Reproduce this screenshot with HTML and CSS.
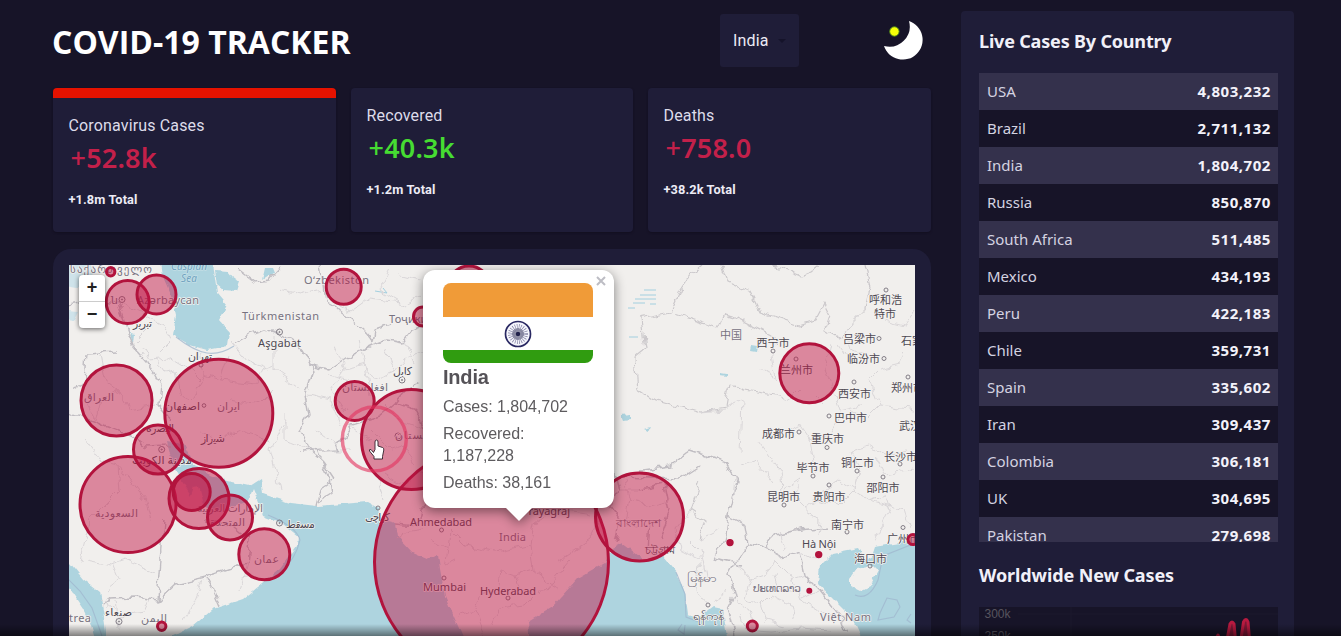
FILE: index.html
```html
<!DOCTYPE html>
<html lang="en">
<head>
<meta charset="utf-8">
<title>COVID-19 Tracker</title>
<link rel="stylesheet" href="styles.css">
</head>
<body>
<div class="app">
  <main class="app-left">
    <header class="header">
      <h1>COVID-19 TRACKER</h1>
      <div class="country-select">India<svg width="8" height="4" viewBox="0 0 10 5"><path d="M0 0h10L5 5z"/></svg></div>
      <svg class="moon" width="42" height="42" viewBox="882 20 42 42"><path d="M909 21A19.8 19.8 0 1 1 884 46A20.4 20.4 0 0 0 909 21Z" fill="#fff"/><circle cx="894.4" cy="31.5" r="4.7" fill="#f6ff08" stroke="#4d8a1c" stroke-width=".9"/></svg>
    </header>
    <section class="stats">
      <article class="card active"><h2>Coronavirus Cases</h2><p class="num"><i>+</i>52.8k</p><p class="total">+1.8m Total</p></article>
      <article class="card green"><h2>Recovered</h2><p class="num"><i>+</i>40.3k</p><p class="total">+1.2m Total</p></article>
      <article class="card"><h2>Deaths</h2><p class="num"><i>+</i>758.0</p><p class="total">+38.2k Total</p></article>
    </section>
    <section class="map-card">
      <div class="map">
        <svg class="tiles" width="846" height="371" viewBox="69 265 846 371">
          <defs>
            <filter id="rough" x="0" y="0" width="100%" height="100%" color-interpolation-filters="sRGB"><feTurbulence type="fractalNoise" baseFrequency=".09" numOctaves="2" seed="4"/><feDisplacementMap in="SourceGraphic" scale="10" xChannelSelector="R" yChannelSelector="G"/></filter>
            <filter id="coast" x="0" y="0" width="100%" height="100%" color-interpolation-filters="sRGB"><feTurbulence type="fractalNoise" baseFrequency=".12" numOctaves="2" seed="2"/><feDisplacementMap in="SourceGraphic" scale="5" xChannelSelector="R" yChannelSelector="G"/></filter>
          </defs>
          <rect x="69" y="265" width="846" height="371" fill="#f1efed"/>
          <g class="water" filter="url(#coast)">
            <path d="M160 255L212 255L215 278L217 293L227 305L219 320L230 333L228 346L207 350L190 345L173 335L176 315L172 297L163 277Z"/>
            <path d="M215 270L228 271L233 277L240 282L237 291L223 290L217 285Z"/>
            <path d="M265 268L272 268L274 273L266 278L262 281Z"/>
            <path class="shallow" d="M60 255H84L95 272L84 283L76 288L60 285ZM60 310L78 312L74 320L60 318Z"/>
            <path d="M60 552L70 563L83 579L100 592L105 623L107 645H97L90 623L83 609L60 575Z"/>
            <path d="M167 441L183 444L193 463L208 474L227 481L250 486L261 479L263 494L290 503L317 506L367 502L378 508L380 519L395 523L397 536L413 553L427 559L438 554L440 569L445 596L458 626L466 645H160L173 636L193 626L213 609L243 599L263 583L280 569L297 546L298 536L283 524L263 516L257 499L253 489L247 503L230 508L210 513L203 502L199 486L194 487L191 495L183 483L173 466Z"/>
            <path d="M530 645L528 621L553 606L577 579L605 563L611 549L622 543L643 559L663 556L677 573L685 593L688 615L698 618L713 607L723 609L728 645Z"/>
            <path d="M865 645L853 619L833 599L818 583L820 566L833 553L858 548L865 560L872 556L875 547L900 543L925 535V645Z"/>
            <path class="land" d="M850 579L857 569L873 566L878 571L870 586L860 591L850 586Z"/>
            <path d="M131 333l3 1-1 9-3-4zM752 346l6 1-1 5-6-1zM720 373l7 1v2l-7-1zM644 429l6-2-2 4zM621 415l9-1v5l-7 1z"/>
          </g>
          <g fill="none" stroke="#a2cfdf" stroke-width="1"><path d="M644 290h12M640 295h16M635 299h21M633 303h12M628 308h7M650 304h6M629 337h9M375 291l12 2M383 288l4 5"/></g>
          <g class="country" filter="url(#rough)">
            <path d="M233 343L250 334L265 329L280 334L297 345L309 360L314 370L306 393L310 415L300 430L309 450L323 462L335 480L320 490L316 506"/>
            <path d="M310 365L330 370L352 355L372 345L386 340L402 343L412 330L425 325"/>
            <path d="M238 269L255 282L270 280L280 268M320 265L325 300L345 315L365 332L373 342M373 342L375 330L390 325"/>
            <path d="M300 452L335 449L352 425L378 417L395 402L405 390L420 382M317 450L330 480L332 494L318 503"/>
            <path d="M69 305L95 300L118 303L124 320L133 345L148 362L160 385L158 405L170 420M87 354L115 352M87 354L85 382L72 390M69 412L100 424L130 436L145 447"/>
            <path d="M158 600L175 584L205 577L247 563L250 540L232 524L203 522M158 600L135 597L110 598L104 607M158 600L164 520M208 578L220 606M145 446L170 445"/>
            <path d="M641 470L670 466L690 450L705 455L726 462L738 480L733 495L728 516L745 525L748 543L765 548L775 535L800 530L828 527"/>
            <path d="M728 516L724 540L715 558L742 565M748 543L735 562L729 573L735 595L728 609L735 636M765 548L782 557L800 552L805 575L820 590L840 615L848 636"/>
            <path d="M600 468L620 477L680 479L700 466M614 472L618 490L610 505L620 520L615 540M640 490L665 485L670 510L660 540M650 520L648 550"/>
            <path d="M395 523L418 525L421 510L440 490M395 402L416 410L424 430"/>
          </g>
          <g class="region" filter="url(#rough)">
            <path class="strong" d="M641 318L645 350L635 358L638 390L650 398L700 412L726 408L730 385L745 390L775 395M640 318L670 312L680 290L690 275L702 265M675 314L718 328L724 315L740 320L770 335L778 345M722 265L728 282L750 292L760 312L800 325L815 320L824 303L830 315L825 330L842 340L850 325L865 310M772 265L800 276L820 268M865 265L870 285L865 310M700 482L690 510L705 520L700 540"/>
            <path d="M120 303L145 315L163 325L170 340M143 347L150 360L170 358L190 370L200 380M170 342L160 352M135 340L145 330M200 350L205 375L220 380L255 384M205 375L190 400L180 395M155 360L165 372L175 370L180 395M220 380L228 355M255 384L262 370L275 365M100 355L105 380L118 390L128 410M118 390L100 400L95 420M128 410L155 405M95 420L85 400M230 400L260 405L275 390M200 430L218 440L240 430L270 440M275 335L275 370L300 388M280 290L300 295L320 290M230 340L245 360L270 370M285 412L285 440L308 450M286 420L270 450L280 490M85 440L100 460L118 465L145 500L150 520M118 465L120 490L90 520L80 560M87 560L110 565L125 560L155 573M112 560L120 580L107 590M203 580L195 600L185 620M247 563L240 590M100 600L120 615L145 612L150 600M115 600L118 630"/>
            <path d="M330 300L350 312L370 298L400 302M390 270L380 290L405 305L420 295M400 275L420 280M335 345L345 370L365 365L375 380L395 372L405 360L425 350M345 370L330 390L345 412M365 365L370 395M385 350L395 372M308 395L330 400L340 425M315 430L338 445M320 450L350 450M385 405L400 420L425 430M370 430L390 450L405 445L415 465M385 475L400 485L425 470M375 470L385 500M350 425L370 440M360 340L365 365M405 340L415 365M330 375L350 380"/>
            <path d="M397 540L410 530L425 528M430 540L448 550L450 530L465 545L500 552L530 545L535 520M448 550L445 565L455 560M530 545L533 570L515 575L500 570L497 590L480 595L475 610L460 615M533 570L560 590M515 575L520 590L535 595L525 605L500 608L490 625M560 560L590 540L600 520M535 520L560 510L590 515M540 595L570 560M475 610L485 636"/>
            <path d="M740 455L742 400L726 408M760 442L780 470L782 490L800 478L795 495L805 505L815 500M740 465L755 460L775 485M805 505L805 515L820 520L818 535M820 495L840 480L855 490L860 465L850 450L870 445L885 455L905 450M860 465L855 490L870 500L885 495L890 510L875 540M815 500L840 505L855 490M800 390L790 400L775 395M790 430L800 425L810 440L830 435L840 420M810 440L815 470M870 380L880 370L900 365L905 350M870 380L880 405L915 410M880 405L865 420L850 410M830 345L825 370L835 395L840 410L860 405M840 345L850 360M700 412L725 410M760 370L775 380L770 350M865 310L845 330L850 350L865 355M885 320L905 325L915 310M735 475L733 500M815 395L825 405M875 455L885 475L915 470M870 500L905 510L910 530"/>
            <path d="M690 510L675 530L680 550L700 560M700 540L720 530M740 565L750 580L765 575L775 560L790 575L800 600M750 580L745 600L760 605L770 595L790 605L795 620M735 600L750 610L755 625M760 605L765 620L785 625M780 530L785 550M800 552L815 560M805 575L790 580M820 590L800 600L825 615L850 615M700 565L695 590L708 605M775 575L780 590L800 590M740 615L745 630L770 632L800 628L830 630M690 540L700 550L705 580M725 590L715 605"/>
            <path d="M624 480L630 500L650 505L670 500M630 500L625 525L640 530M618 490L640 490"/>
          </g>
          <g fill="none" stroke="#9fb6ce" stroke-width="1.1" opacity=".75"><path d="M60 571l20 20 12 17 10 28M176 337q18 14 31 16t27-7M268 515q29 12 32 25q-4 18-18 31M676 572l9 22 1 23 13 5 M887 598l-7 15-2 7 16-3 6-10-3-7zM855 595q14 6 23-15l5-24 30-12M911 614l-4 6 4 3M682 624l-4 6 6 4 1-9"/></g>
          <g class="places">
            <g class="marks"><circle cx="122" cy="299.500" r="3"/><circle cx="279.500" cy="332" r="3"/><circle cx="161.700" cy="449.500" r="3"/><circle cx="119" cy="621.500" r="3"/><circle cx="279.500" cy="523" r="3"/><circle cx="402" cy="380" r="3"/><circle cx="398" cy="436" r="3"/><g class="dots"><circle cx="122" cy="299.500" r=".6"/><circle cx="279.500" cy="332" r=".6"/><circle cx="161.700" cy="449.500" r=".6"/><circle cx="119" cy="621.500" r=".6"/><circle cx="279.500" cy="523" r=".6"/><circle cx="402" cy="380" r=".6"/></g><circle cx="204" cy="405.500" r="1.800"/><circle cx="441.500" cy="530" r="2"/><circle cx="444" cy="578" r="2"/><circle cx="508" cy="598" r="2"/><circle cx="201" cy="365" r="2"/><circle cx="378" cy="508" r="2"/><circle cx="886" cy="290" r="2"/><circle cx="773" cy="351" r="2"/><circle cx="796" cy="359" r="2"/><circle cx="879" cy="338.500" r="2"/><circle cx="884" cy="358.500" r="2"/><circle cx="908" cy="377" r="2"/><circle cx="854" cy="382" r="2"/><circle cx="829" cy="416" r="2"/><circle cx="799" cy="432" r="2"/><circle cx="827" cy="447.500" r="2"/><circle cx="813" cy="476" r="2"/><circle cx="857" cy="471" r="2"/><circle cx="900" cy="464" r="2"/><circle cx="829" cy="485" r="2"/><circle cx="883" cy="477" r="2"/><circle cx="784" cy="505" r="2"/><circle cx="847" cy="532" r="2"/><circle cx="903" cy="527.500" r="2"/><circle cx="870" cy="566" r="2"/><circle cx="708" cy="605" r="2"/></g>
            <g class="state"><text x="70" y="273" textLength="82">საქართველო</text><text x="111" y="303.500" textLength="5">ն</text><text x="137" y="304" textLength="62">Azərbaycan</text><text x="242" y="320" textLength="77">Türkmenistan</text><text x="304" y="284" textLength="65">Oʻzbekiston</text><text x="389" y="323" textLength="62">Тоҷикистон</text><text x="84" y="401" textLength="30">العراق</text><text x="217" y="410" textLength="23">ايران</text><text x="95" y="517" textLength="43">السعودية</text><text x="254" y="563" textLength="25">عمان</text><text x="141" y="622" textLength="26">اليمن</text><text x="342" y="391" textLength="46">افغانستان</text><text x="395" y="439" textLength="42">پاکستان</text><text x="197" y="512" textLength="66">الإمارات العربية</text><text x="210" y="526" textLength="35">المتحدة</text><text x="499" y="541" textLength="27">India</text><text x="69" y="622" textLength="22">trea</text><text x="753" y="592" textLength="48">ປະເທດລາວ</text><text x="820" y="620.500" textLength="51">Việt Nam</text><text x="616" y="527" textLength="46" lengthAdjust="spacingAndGlyphs">বাংলাদেশ</text><text x="687" y="582" textLength="29" lengthAdjust="spacingAndGlyphs">မြန်မာ</text><text x="720" y="339">中国</text></g>
            <g class="city"><text x="258" y="347" textLength="43">Aşgabat</text><text x="133" y="327" textLength="19">تبریز</text><text x="188" y="360" textLength="24">تهران</text><text x="165" y="410" textLength="35">اصفهان</text><text x="201" y="442" textLength="24">شیراز</text><text x="146" y="432" textLength="28">البصرة</text><text x="132" y="464" textLength="60">مدينة الكويت</text><text x="105" y="616" textLength="27">صنعاء</text><text x="286" y="528" textLength="29">مسقط</text><text x="393" y="375" textLength="19">کابل</text><text x="365" y="521" textLength="25">کراچی</text><text x="410" y="526" textLength="62">Ahmedabad</text><text x="423" y="591" textLength="43">Mumbai</text><text x="480" y="595" textLength="56">Hyderabad</text><text x="522" y="514.500" textLength="48">Prayagraj</text><text x="802" y="548" textLength="34">Hà Nội</text><text x="645" y="554" textLength="30" lengthAdjust="spacingAndGlyphs">চট্টগ্রাম</text><text x="693" y="620" textLength="31" lengthAdjust="spacingAndGlyphs">ရန်ကုန်</text>
              <text x="869" y="304">呼和浩</text><text x="874" y="318">特市</text><text x="843" y="343">吕梁市</text><text x="901" y="345">石家庄</text><text x="756.500" y="347">西宁市</text><text x="847" y="363">临汾市</text><text x="780" y="373.500">兰州市</text><text x="838" y="397.500">西安市</text><text x="891" y="392">郑州市</text><text x="834" y="421.500">巴中市</text><text x="899" y="430">武汉</text><text x="762" y="438">成都市</text><text x="811" y="443">重庆市</text><text x="796.500" y="472">毕节市</text><text x="841" y="467">铜仁市</text><text x="884" y="461">长沙市</text><text x="866.500" y="492">邵阳市</text><text x="767" y="501">昆明市</text><text x="812.500" y="500.500">贵阳市</text><text x="831" y="528.500">南宁市</text><text x="887" y="543">广州市</text><text x="854" y="562.500">海口市</text>
            </g>
            <g class="sea"><text x="171" y="270" textLength="36">Caspian</text><text x="181" y="282" textLength="16">Sea</text></g>
          </g>
          <g class="cases">
            <circle cx="491.500" cy="562" r="117"/><circle cx="411.500" cy="439.500" r="50"/><circle cx="218.800" cy="413.200" r="54"/><circle cx="128" cy="504.500" r="48"/><circle cx="639.500" cy="517" r="44"/><circle cx="116.500" cy="400.500" r="35.500"/><circle cx="199" cy="498.500" r="30"/><circle cx="809.300" cy="373.300" r="29.500"/><circle cx="264.300" cy="554.300" r="25.500"/><circle cx="158" cy="449.500" r="24.500"/><circle cx="230" cy="517.500" r="22.500"/><circle cx="469" cy="287" r="21"/><circle cx="127.700" cy="302" r="21.500"/><circle cx="156.500" cy="294.500" r="19.500"/><circle cx="354.700" cy="401" r="19.500"/><circle class="dense" cx="191.700" cy="492" r="18.500"/><circle cx="343.700" cy="286.700" r="17.500"/><circle cx="423" cy="316.500" r="9.500"/><circle cx="110.700" cy="271.700" r="4.200"/><circle cx="161.700" cy="626.300" r="4.200"/><circle cx="752.300" cy="626" r="5"/><circle cx="913" cy="539.600" r="5"/>
            <g class="dot"><circle cx="730" cy="542.600" r="2.200"/><circle cx="818.700" cy="554.600" r="2.200"/><circle cx="809.300" cy="590.700" r="1.500"/></g>
          </g>
          <circle cx="374.300" cy="439" r="32" fill="none" stroke="#e4345f" stroke-opacity=".62" stroke-width="3.500"/>
          <path d="M375.500 449V441.500Q375.500 439.500 377 439.500Q378.500 439.500 378.500 441.500V445.500L383 447Q384.500 447.500 384.300 449.500L383 456V458.500H374.500V456L370 450.500Q369.300 448.700 371.500 449L374 452Z" fill="#fff" stroke="#30202a" stroke-width=".9" transform="translate(-.5 .5)"/>
        </svg>
        <div class="zoom-control"><a>+</a><a>−</a></div>
        <div class="popup">
          <svg class="close" width="10" height="10" viewBox="0 0 10 10"><path d="M1 1l8 8M9 1L1 9"/></svg>
          <div class="flag"><svg width="28" height="28" viewBox="-14 -14 28 28"><circle r="12.500" fill="#f5f5fc" stroke="#292862" stroke-width="1.700"/><circle r="6.500" fill="none" stroke="#77779b" stroke-width="7" stroke-dasharray=".5 1.200"/><circle r="4" fill="none" stroke="#656583" stroke-width="4" opacity=".65"/><circle r="2.300" fill="#20204a"/></svg></div>
          <h3>India</h3>
          <p>Cases: 1,804,702</p><p>Recovered: 1,187,228</p><p>Deaths: 38,161</p>
        </div>
      </div>
    </section>
  </main>
  <aside class="panel">
    <h2>Live Cases By Country</h2>
    <div class="table">
      <div class="row"><span>USA</span><b>4,803,232</b></div><div class="row"><span>Brazil</span><b>2,711,132</b></div><div class="row"><span>India</span><b>1,804,702</b></div><div class="row"><span>Russia</span><b>850,870</b></div><div class="row"><span>South Africa</span><b>511,485</b></div><div class="row"><span>Mexico</span><b>434,193</b></div><div class="row"><span>Peru</span><b>422,183</b></div><div class="row"><span>Chile</span><b>359,731</b></div><div class="row"><span>Spain</span><b>335,602</b></div><div class="row"><span>Iran</span><b>309,437</b></div><div class="row"><span>Colombia</span><b>306,181</b></div><div class="row"><span>UK</span><b>304,695</b></div><div class="row"><span>Pakistan</span><b>279,698</b></div>
    </div>
    <h2 class="graph-title">Worldwide New Cases</h2>
    <svg class="graph" width="299" height="29" viewBox="979 607 299 29"><path d="M1018 614H1278M1071 607V667" stroke="#1c192c"/><text x="984.500" y="618">300k</text><text x="984.500" y="639.500">250k</text><path d="M1214 643L1218 635L1221 641L1226 645L1230 624Q1232 620 1234 624L1236 645H1240L1243.500 622Q1246 617 1248 622L1250 645" fill="#7d1735" stroke="#b81a40" stroke-width="3" stroke-linejoin="round"/></svg>
  </aside>
</div>
<div class="bottom-shade"></div>
</body>
</html>
```
FILE: styles.css
```css
* { box-sizing: border-box; margin: 0; }
body { height: 636px; overflow: hidden; background: #171428; color: #ecebf5; font-family: "Noto Sans", "Open Sans", sans-serif; }
.app { display: flex; gap: 30px; padding-left: 53px; height: 636px; }
.app-left { width: 878px; flex: none; }
.header { display: flex; height: 88px; align-items: flex-start; padding-top: 14px; }
h1 { font-size: 32px; line-height: 44px; margin: 6px 0 0 -1px; width: 668px; white-space: nowrap; color: #fff; font-family: "Open Sans", sans-serif; letter-spacing: 0; }
.country-select { width: 79px; height: 53px; padding-left: 13px; background: #1f1d38; border-radius: 3px; display: flex; align-items: center; gap: 9px; font: 16px Roboto, sans-serif; letter-spacing: .15px; }
.country-select svg { fill: #15132a; }
.moon { margin: 6px 0 0 83px; }
.stats { display: grid; grid-template-columns: 283px 282px 283px; gap: 15px; height: 144px; }
.card { background: #1f1d38; border-radius: 4px; padding: 17px 16px 0 15.5px; box-shadow: 0 1px 2px #120f20; }
.card.active { border-top: 10px solid #e51200; }
.card h2 { font: 400 16px/22px Roboto, sans-serif; letter-spacing: .15px; color: #dddcea; }
.num { font-size: 27px; line-height: 34px; font-weight: 600; color: #c3204a; margin: 4px 0 0 2px; letter-spacing: .2px; }
.num i { font-style: normal; font-weight: 500; }
.green .num { color: #46dc32; }
.total { font: 700 12.800px/18px Roboto, sans-serif; margin-top: 16px; letter-spacing: .1px; }
.map-card { margin-top: 17px; padding: 16px 16px 0; height: 387px; border-radius: 18px 18px 0 0; background: #1f1d38; }
.map { position: relative; width: 846px; height: 371px; overflow: hidden; }
.tiles { display: block; }
.water { fill: #aed4df; }
.water .shallow { fill: #cfe3ea; }
.water .land { fill: #f1efed; }
.country, .region { fill: none; stroke-linejoin: round; }
.country { stroke: #c0bdc2; stroke-width: 1.4; }
.region { stroke: #d9d6d8; stroke-width: 1; }
.region .strong { stroke: #cbc8cb; stroke-width: 1.2; }
.places { font-family: "Noto Sans", "Noto Sans CJK SC", "DejaVu Sans", sans-serif; font-size: 11px; stroke: #f4f2f0; stroke-width: 1.5px; stroke-linejoin: round; }
.places text { paint-order: stroke; }
.marks { fill: none; stroke: #77727c; stroke-width: .9px; }
.state { fill: #77717f; }
.city { fill: #4d4852; }
.sea { fill: #6fa3c0; stroke: #c5dfe6; font-style: italic; font-size: 10px; }
.cases { fill: #c21445; fill-opacity: .47; stroke: #b2133d; stroke-width: 3; }
.cases .dense { fill-opacity: .6; }
.cases .dot { fill-opacity: 1; }
.zoom-control { position: absolute; left: 10px; top: 10px; width: 26px; height: 53px; background: #fff; border-radius: 4px; box-shadow: 0 1px 5px #0009; }
.zoom-control a { display: block; height: 26px; font: 700 18px/25px "Liberation Sans", sans-serif; text-align: center; color: #222; }
.zoom-control a + a { border-top: 1px solid #ccc; }
.popup { position: absolute; left: 354px; top: 5px; width: 191px; height: 238px; padding: 13px 20px; background: #fff; border-radius: 12px; color: #5d5b5e; font: 16px/22px "Liberation Sans", sans-serif; filter: drop-shadow(0 3px 6px #0007); }
.popup::after { content: ""; position: absolute; left: 83px; top: 238px; border: 13px solid transparent; border-top-color: #fff; border-bottom: 0; }
.close { position: absolute; right: 8px; top: 6px; stroke: #bdbdc4; stroke-width: 2; }
.flag { width: 150px; height: 80px; border-radius: 8px; background: linear-gradient(#f09b38 34px, #fff 34px 67px, #309c10 67px); display: flex; justify-content: center; padding-top: 36.500px; }
.flag svg { flex: none; }
.popup h3 { font-size: 20px; line-height: 24px; margin: 2px 0 7px; color: #555257; letter-spacing: -.2px; }
.popup p { margin-bottom: 5px; letter-spacing: -.03px; }
.panel { width: 333px; flex: none; margin-top: 11px; padding: 17px 16px 0 18px; background: #1f1d38; border-radius: 4px 4px 0 0; overflow: hidden; }
.panel h2 { font-size: 18px; line-height: 26px; white-space: nowrap; color: #f1f0f8; letter-spacing: -.18px; }
.table { margin-top: 19px; height: 469px; overflow: hidden; }
.row { height: 37px; display: flex; justify-content: space-between; align-items: center; padding: 0 7px 2px 8px; font-size: 15px; color: #d4d3e1; background: #171428; }
.row:nth-child(odd) { background: #34314c; }
.row b { color: #f3f2fa; letter-spacing: .55px; }
.panel .graph-title { margin-top: 20px; letter-spacing: -.1px; }
.graph { display: block; margin-top: 19px; background: #171428; font: 12px "Liberation Sans", sans-serif; fill: #58545f; }
.bottom-shade { position: absolute; left: 0; right: 0; top: 624px; height: 12px; background: linear-gradient(#0000, #0007); }
```
